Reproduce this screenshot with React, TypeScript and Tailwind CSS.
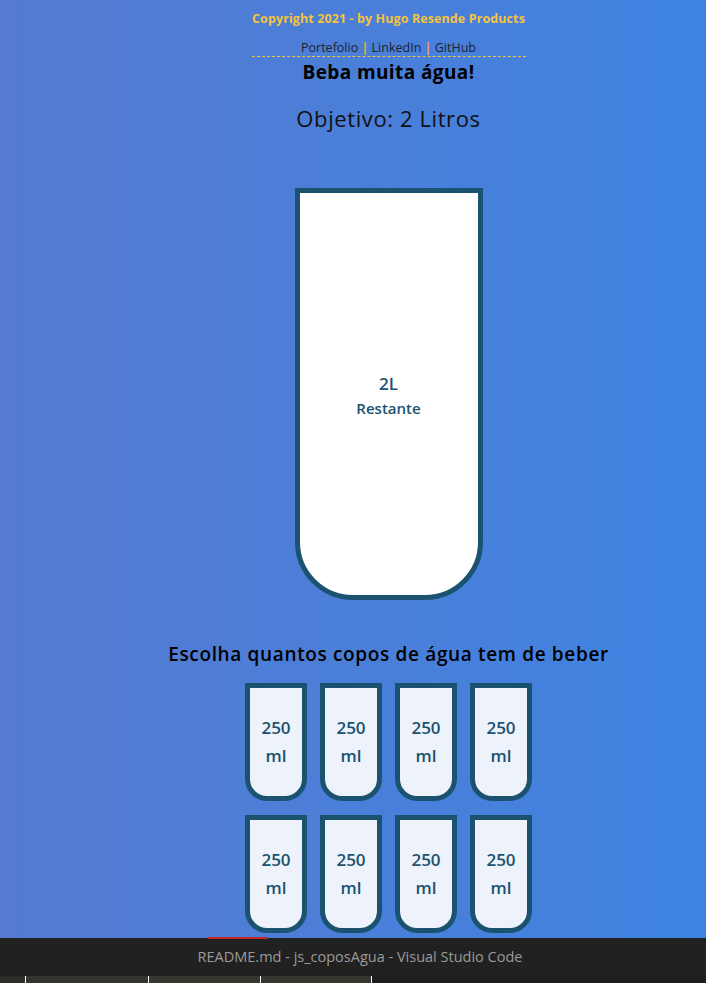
const cups = Array.from({ length: 8 }, (_, i) => i);

function SmallCup() {
  return (
    <div className="flex h-[118px] w-[62px] flex-col items-center justify-center rounded-b-[22px] border-[5px] border-[#1a5270] bg-[#eef3fb] text-[17px] font-semibold leading-[28px] text-[#1a5270]">
      <span>250</span>
      <span>ml</span>
    </div>
  );
}

export default function App() {
  return (
    <div className="flex h-[983px] flex-col overflow-hidden font-['Open_Sans',sans-serif]">
      {/* Page */}
      <div className="flex-1 overflow-hidden bg-gradient-to-r from-[#557ad0] to-[#3d83e1] pl-[71px]">
        <div className="flex flex-col items-center">
          {/* Header */}
          <header className="mt-[10px] flex w-[274px] flex-col items-center border-b border-dashed border-[#f5c33b]">
            <p className="text-[12.5px] font-bold leading-[17px] tracking-[0.1px] text-[#f6c33c]">
              Copyright 2021 - by Hugo Resende Products
            </p>
            <p className="mt-[13px] text-[12.5px] leading-[16px] text-[#1e2230]">
              Portefolio <span className="font-bold text-[#f2a83a]">|</span> LinkedIn{" "}
              <span className="font-bold text-[#f2a83a]">|</span> GitHub
            </p>
          </header>

          <h1 className="mt-[4px] text-[19px] font-bold leading-[22px] tracking-[0.4px] text-black">
            Beba muita água!
          </h1>
          <h3 className="mt-[21px] text-[22px] leading-[28px] tracking-[0.6px] text-[#111]">Objetivo: 2 Litros</h3>

          {/* Big cup */}
          <div className="mt-[56px] flex h-[412px] w-[188px] flex-col items-center justify-center rounded-b-[58px] border-[5px] border-[#1a5270] bg-white text-[#1a5270]">
            <span className="text-[17px] font-semibold leading-[24px]">2L</span>
            <span className="mt-[3px] text-[15px] font-semibold leading-[18px]">Restante</span>
          </div>

          <p className="mt-[41px] text-[19px] font-semibold leading-[26px] tracking-[0.65px] text-black">
            Escolha quantos copos de água tem de beber
          </p>

          {/* Small cups */}
          <div className="mt-[16px] grid grid-cols-4 gap-x-[13px] gap-y-[14px]">
            {cups.map((i) => (
              <SmallCup key={i} />
            ))}
          </div>
        </div>
      </div>

      {/* VS Code window bar */}
      <div className="relative flex h-[38px] items-center justify-center bg-[#212121]">
        <div className="absolute left-[208px] top-[-1px] h-[2px] w-[60px] bg-[#c4262e]" />
        <span className="ml-[14px] text-[14.5px] text-[#9a9a9a]">
          README.md - js_coposAgua - Visual Studio Code
        </span>
      </div>
      <div className="flex h-[7px]">
        <div className="w-[25px] bg-[#2c2c29]" />
        <div className="ml-px w-[122px] bg-[#34342f]" />
        <div className="ml-px w-[111px] bg-[#36362f]" />
        <div className="ml-px w-[110px] bg-[#36362f]" />
        <div className="ml-px flex-1 bg-[#1e1e1e]" />
      </div>
    </div>
  );
}
